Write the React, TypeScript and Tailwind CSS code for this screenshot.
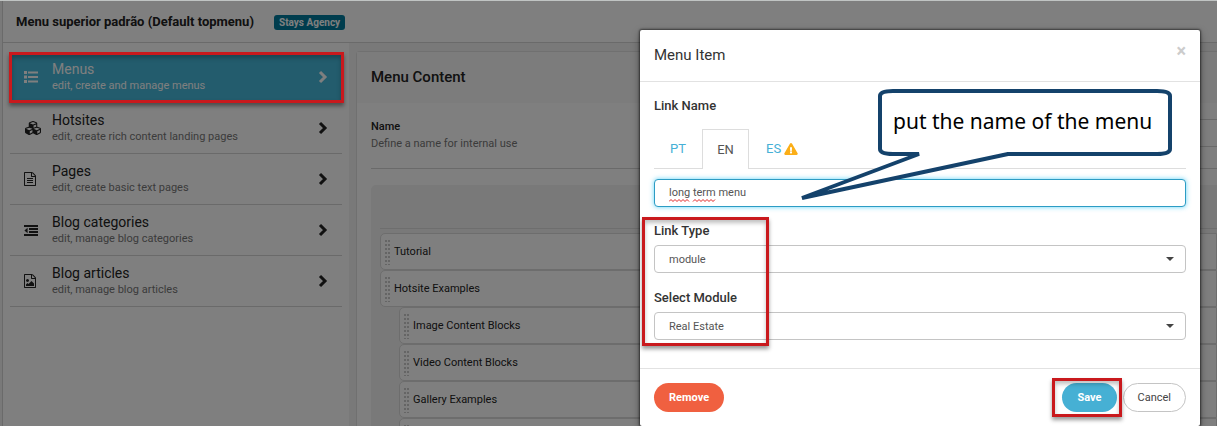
import React from "react";
import { FaCubes, FaExclamationTriangle } from "react-icons/fa";

const FILE =
  "M1468 380q28 28 48 76t20 88v1152q0 40-28 68t-68 28h-1344q-40 0-68-28t-28-68v-1600q0-40 28-68t68-28h896q40 0 88 20t76 48zm-444-244v376h376q-10-29-22-41l-313-313q-12-12-41-22zm384 1528v-1024h-416q-40 0-68-28t-28-68v-416h-768v1536h1280z";

function ListIcon() {
  return (
    <svg viewBox="0 0 14 12" className="h-[12px] w-[14px]" fill="currentColor">
      <path d="M0 0h3v3H0zM0 4.5h3v3H0zM0 9h3v3H0zM4 .5h10v2H4zM4 5h10v2H4zM4 9.5h10v2H4z" />
    </svg>
  );
}

function TextFileIcon() {
  return (
    <svg viewBox="0 0 1536 1792" className="h-[14px] w-[12px]" fill="currentColor">
      <path d={FILE} />
      <path d="M384 768h768v128H384zM384 1024h768v128H384zM384 1280h768v128H384z" />
    </svg>
  );
}

function ImageFileIcon() {
  return (
    <svg viewBox="0 0 1536 1792" className="h-[14px] w-[12px]" fill="currentColor">
      <path d={FILE} />
      <path d="M1280 1216v320h-1024v-192l192-192 128 128 384-384zm-832-192q-80 0-136-56t-56-136 56-136 136-56 136 56 56 136-56 136-136 56z" />
    </svg>
  );
}

function OutdentIcon() {
  return (
    <svg viewBox="0 0 14 11" className="h-[11px] w-[14px]" fill="currentColor">
      <path d="M0 0h14v2H0zM5 3h9v2H5zM5 6h9v2H5zM0 9h14v2H0zM3.6 2.8v5.4L.4 5.5z" />
    </svg>
  );
}

function ChevronIcon() {
  return (
    <svg viewBox="0 0 10 14" className="h-[14px] w-[10px]" fill="none" stroke="currentColor" strokeWidth="3">
      <path d="M2 2l5 5-5 5" />
    </svg>
  );
}

const NAV = [
  { title: "Menus", text: "edit, create and manage menus", icon: <ListIcon />, active: true },
  { title: "Hotsites", text: "edit, create rich content landing pages", icon: <FaCubes className="h-[16px] w-[18px]" /> },
  { title: "Pages", text: "edit, create basic text pages", icon: <TextFileIcon /> },
  { title: "Blog categories", text: "edit, manage blog categories", icon: <OutdentIcon /> },
  { title: "Blog articles", text: "edit, manage blog articles", icon: <ImageFileIcon /> },
];

const ITEMS = [
  { label: "Tutorial", nested: false },
  { label: "Hotsite Examples", nested: false },
  { label: "Image Content Blocks", nested: true },
  { label: "Video Content Blocks", nested: true },
  { label: "Gallery Examples", nested: true },
  { label: "", nested: true },
];

function Grip() {
  return (
    <svg viewBox="0 0 5 25" className="h-[25px] w-[5px] shrink-0" fill="#cacaca">
      {[0, 1, 2, 3, 4, 5, 6].map((row) => (
        <path key={row} d={`M0 ${row * 4}h2v2H0zM3 ${row * 4}h2v2H3z`} />
      ))}
    </svg>
  );
}

function Highlight({ className }: { className: string }) {
  return (
    <span
      aria-hidden="true"
      className={`pointer-events-none absolute z-20 border-3 border-[#c9191d] shadow-[0_3px_4px_rgba(0,0,0,0.4),inset_0_3px_4px_rgba(0,0,0,0.25)] ${className}`}
    />
  );
}

function SelectField({ id, label, value }: { id: string; label: string; value: string }) {
  return (
    <div>
      <label htmlFor={id} className="block text-[13px] leading-4 font-medium text-[#333]">
        {label}
      </label>
      <div className="relative mt-[6px]">
        <select
          id={id}
          defaultValue={value}
          className="block h-7 w-full appearance-none rounded-[4px] border border-[#c4c4c4] bg-white px-[14px] pt-[2px] text-[11px] text-[#555]"
        >
          <option>{value}</option>
        </select>
        <svg viewBox="0 0 8 4" className="pointer-events-none absolute top-3 right-3 h-1 w-2" fill="#444">
          <path d="M0 0h8L4 4z" />
        </svg>
      </div>
    </div>
  );
}

function SpellingMarks() {
  return (
    <svg
      viewBox="0 0 48 3"
      className="pointer-events-none absolute bottom-1 left-[14px] h-[3px] w-12"
      fill="none"
      stroke="#e02020"
      strokeWidth="1"
    >
      <path d="M0 2.5l2-2 2 2 2-2 2 2 2-2 2 2 2-2 2 2 2-2 2 2M24 2.5l2-2 2 2 2-2 2 2 2-2 2 2 2-2 2 2 2-2 2 2 2-2" />
    </svg>
  );
}

function Callout() {
  return (
    <div className="pointer-events-none absolute top-[7px] right-[28px] z-20 h-[112px] w-[373px]">
      <svg viewBox="0 0 373 112" className="absolute inset-0 h-full w-full" fill="none">
        <path
          d="M120 65L3 109L209 65H358Q371 65 371 60V7Q371 2 358 2H94Q81 2 81 7V60Q81 65 94 65Z"
          fill="#fff"
          stroke="#14426b"
          strokeWidth="4"
          strokeLinejoin="bevel"
        />
      </svg>
      <p className="relative pt-[18px] pl-[94px] font-['Noto_Sans',sans-serif] text-[21px] leading-7 whitespace-nowrap text-black">
        put the name of the menu
      </p>
    </div>
  );
}

export default function App() {
  return (
    <div className="relative h-screen overflow-hidden bg-[#f2f2f2] font-[Roboto,sans-serif] text-[#222]">
      <div className="flex h-full flex-col pl-[2px]">
        <header className="mt-px flex h-[42px] shrink-0 items-center gap-5 border-b border-l border-[#d4d4d4] bg-white px-[13px]">
          <h1 className="text-[13px] font-bold">Menu superior padrão (Default topmenu)</h1>
          <span className="mt-[2px] rounded-[3px] bg-[#007a9c] px-[5px] text-[10px] leading-[15px] font-bold text-white">
            Stays Agency
          </span>
        </header>
        <div className="flex min-h-0 flex-1">
          <nav className="w-[347px] shrink-0 border-l border-[#d4d4d4] bg-white pt-[9px] pr-[7px] pl-[7px]">
            {NAV.map((item) => (
              <a
                key={item.title}
                href="#"
                className={`relative flex h-[51px] items-center border-b border-[#d4d4d4] px-[14px] ${
                  item.active ? "bg-[#46b8da] text-white" : "text-[#222]"
                }`}
              >
                <span className="w-7 shrink-0">{item.icon}</span>
                <span className="flex-1">
                  <span className="block text-[14px] leading-4">{item.title}</span>
                  <span className={`block text-[11px] leading-[17px] ${item.active ? "text-white" : "text-[#777]"}`}>
                    {item.text}
                  </span>
                </span>
                <ChevronIcon />
              </a>
            ))}
          </nav>
          <main className="ml-[7px] flex-1 pt-2">
            <section className="rounded-tl-[4px] border-t border-l border-[#e0e0e0] bg-white">
              <h2 className="flex h-[51px] items-center bg-[#f8f8f8] px-[14px] text-[15px] font-medium">Menu Content</h2>
              <div className="pl-[14px]">
                <div className="flex h-[66px] items-start justify-between border-b border-[#d4d4d4] pt-[16px]">
                  <label htmlFor="menu-name" className="text-[11px]">
                    <span className="block leading-4 font-medium">Name</span>
                    <span className="block leading-[18px] text-[#777]">Define a name for internal use</span>
                  </label>
                  <input id="menu-name" className="h-7 w-1/2 border-y border-[#d4d4d4] bg-white px-3 text-[11px]" />
                </div>
                <div className="mt-4 rounded-tl-[5px] bg-[#f2f2f2] pt-[43px] pl-[9px]">
                  <ul className="border-t border-[#dcdcdc] pt-[4px]">
                    {ITEMS.map((item, index) => (
                      <li
                        key={index}
                        className={`flex h-[37px] items-center gap-1 rounded-l-[5px] border border-[#dadada] bg-white pt-[2px] pl-1 text-[11px] ${
                          item.nested ? "ml-[19px]" : ""
                        }`}
                      >
                        <Grip />
                        {item.label}
                      </li>
                    ))}
                  </ul>
                </div>
              </div>
            </section>
          </main>
        </div>
      </div>

      <div className="absolute inset-0 z-10 border-t border-[#c0c4c3] bg-black/50" />

      <div className="absolute inset-0 z-20 pt-[52px] pl-[9px]">
        <div className="relative h-[51px] w-[335px]">
          <Highlight className="inset-0" />
        </div>
      </div>

      <div className="absolute inset-0 z-30 flex items-start justify-end pt-[30px] pr-[17px]">
        <div
          role="dialog"
          aria-labelledby="dialog-title"
          className="w-[560px] rounded-[2px] bg-white shadow-[0_0_2px_1px_rgba(0,0,0,0.5),0_3px_9px_rgba(0,0,0,0.4)]"
        >
          <div className="flex h-[52px] items-start justify-between border-b border-[#e2e2e2] px-[14px]">
            <h2 id="dialog-title" className="pt-[15px] text-[15px] leading-5 text-[#333]">Menu Item</h2>
            <button aria-label="Close" className="pt-[12px] text-[18px] leading-[18px] font-bold text-[#ccc]">×</button>
          </div>
          <div className="relative px-[14px] pt-4 pb-[28px]">
            <Callout />
            <label htmlFor="link-name" className="block text-[13px] leading-4 font-medium text-[#333]">
              Link Name
            </label>
            <div role="tablist" className="mt-[15px] flex h-[40px] border-b border-[#ddd] text-[13px]">
              <button role="tab" className="w-12 text-[#46b0d6]">PT</button>
              <button role="tab" aria-selected="true" className="-mb-px w-[47px] border border-b-0 border-[#ddd] bg-white text-[#555]">
                EN
              </button>
              <button role="tab" className="flex items-center gap-[3px] px-[17px] text-[#46b0d6]">
                ES <FaExclamationTriangle className="h-3 w-[14px] text-[#fbae17]" />
              </button>
            </div>
            <div className="relative mt-[10px] h-7 rounded-[4px] border border-[#2c9cc4] bg-white shadow-[0_0_5px_rgba(60,200,245,0.8)]">
              <input
                id="link-name"
                defaultValue="long term menu"
                spellCheck={false}
                className="block h-full w-full bg-transparent px-[14px] pb-[2px] text-[11px] text-[#555] outline-none"
              />
              <SpellingMarks />
            </div>
            <div className="relative mt-[16px] flex flex-col gap-[17px]">
              <Highlight className="-top-[6px] -bottom-[6px] -left-3 w-[127px]" />
              <SelectField id="link-type" label="Link Type" value="module" />
              <SelectField id="select-module" label="Select Module" value="Real Estate" />
            </div>
          </div>
          <div className="flex items-center border-t border-[#e2e2e2] px-[14px] py-[14px] text-[11px]">
            <button className="h-[29px] rounded-full bg-[#f06040] px-[15px] pt-px font-bold text-white">Remove</button>
            <div className="relative ml-auto">
              <Highlight className="-inset-y-[5px] -right-[5px] -left-[10px]" />
              <button className="h-[29px] rounded-full bg-[#46b0d4] px-[15px] pt-px font-bold text-white">Save</button>
            </div>
            <button className="ml-[6px] h-[29px] rounded-full border border-[#c4c4c4] px-[14px] pt-px text-[#444]">Cancel</button>
          </div>
        </div>
      </div>
    </div>
  );
}
